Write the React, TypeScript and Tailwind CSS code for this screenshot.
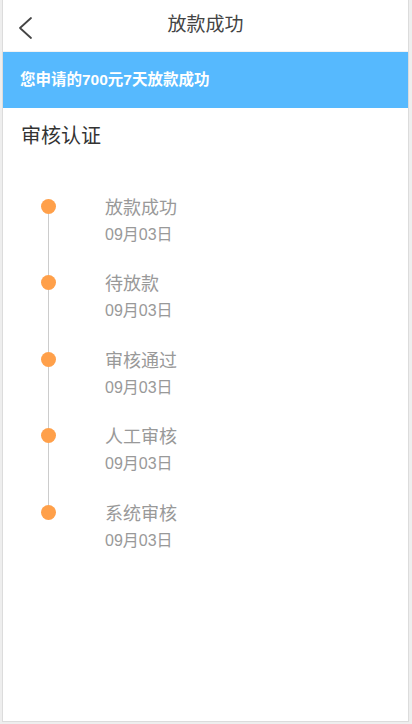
const steps = [
  { title: '放款成功', date: '09月03日' },
  { title: '待放款', date: '09月03日' },
  { title: '审核通过', date: '09月03日' },
  { title: '人工审核', date: '09月03日' },
  { title: '系统审核', date: '09月03日' },
];

export default function App() {
  return (
    <div
      className="w-[412px] h-[724px] bg-[#eeeeee] pl-[2px] pr-[3px] pb-[2px]"
      style={{ fontFamily: '"Liberation Sans", "Noto Sans CJK SC", sans-serif' }}
    >
      <div className="h-full bg-white border-x border-b border-[#dcdcdc] flex flex-col">
        {/* Header */}
        <div className="relative h-[52px] flex items-center justify-center border-b border-[#f2f2f2]">
          <svg className="absolute left-[13px] top-[15px]" width="20" height="26" viewBox="0 0 20 26" fill="none">
            <polyline points="15,3 4,13 15,23" stroke="#444" strokeWidth="1.8" strokeLinecap="round" strokeLinejoin="round" />
          </svg>
          <span className="text-[19px] text-[#444]">放款成功</span>
        </div>

        {/* Notice bar */}
        <div className="h-[56px] bg-[#56b9fe] flex items-center px-[17px]">
          <span className="text-[15.5px] text-white font-semibold">您申请的700元7天放款成功</span>
        </div>

        {/* Section heading */}
        <div className="h-[56px] flex items-center pl-[18px]">
          <span className="text-[20px] text-[#333]">审核认证</span>
        </div>

        {/* Timeline */}
        <div className="pt-[26.5px]">
          {steps.map((s, i) => (
            <div key={i} className="flex h-[76.5px]">
              <div className="w-[90px] flex flex-col items-center">
                <div className={`w-px h-[8px] ${i === 0 ? '' : 'bg-[#cccccc]'}`} />
                <div className="w-[15px] h-[15px] rounded-full bg-[#ffa04a] shrink-0" />
                <div className={`w-px flex-1 ${i === steps.length - 1 ? '' : 'bg-[#cccccc]'}`} />
              </div>
              <div className="pl-[12px] pt-[6px] flex flex-col">
                <span className="text-[18px] leading-[22px] text-[#999]">{s.title}</span>
                <span className="mt-[6px] text-[16px] leading-[20px] text-[#999]">{s.date}</span>
              </div>
            </div>
          ))}
        </div>
      </div>
    </div>
  );
}
